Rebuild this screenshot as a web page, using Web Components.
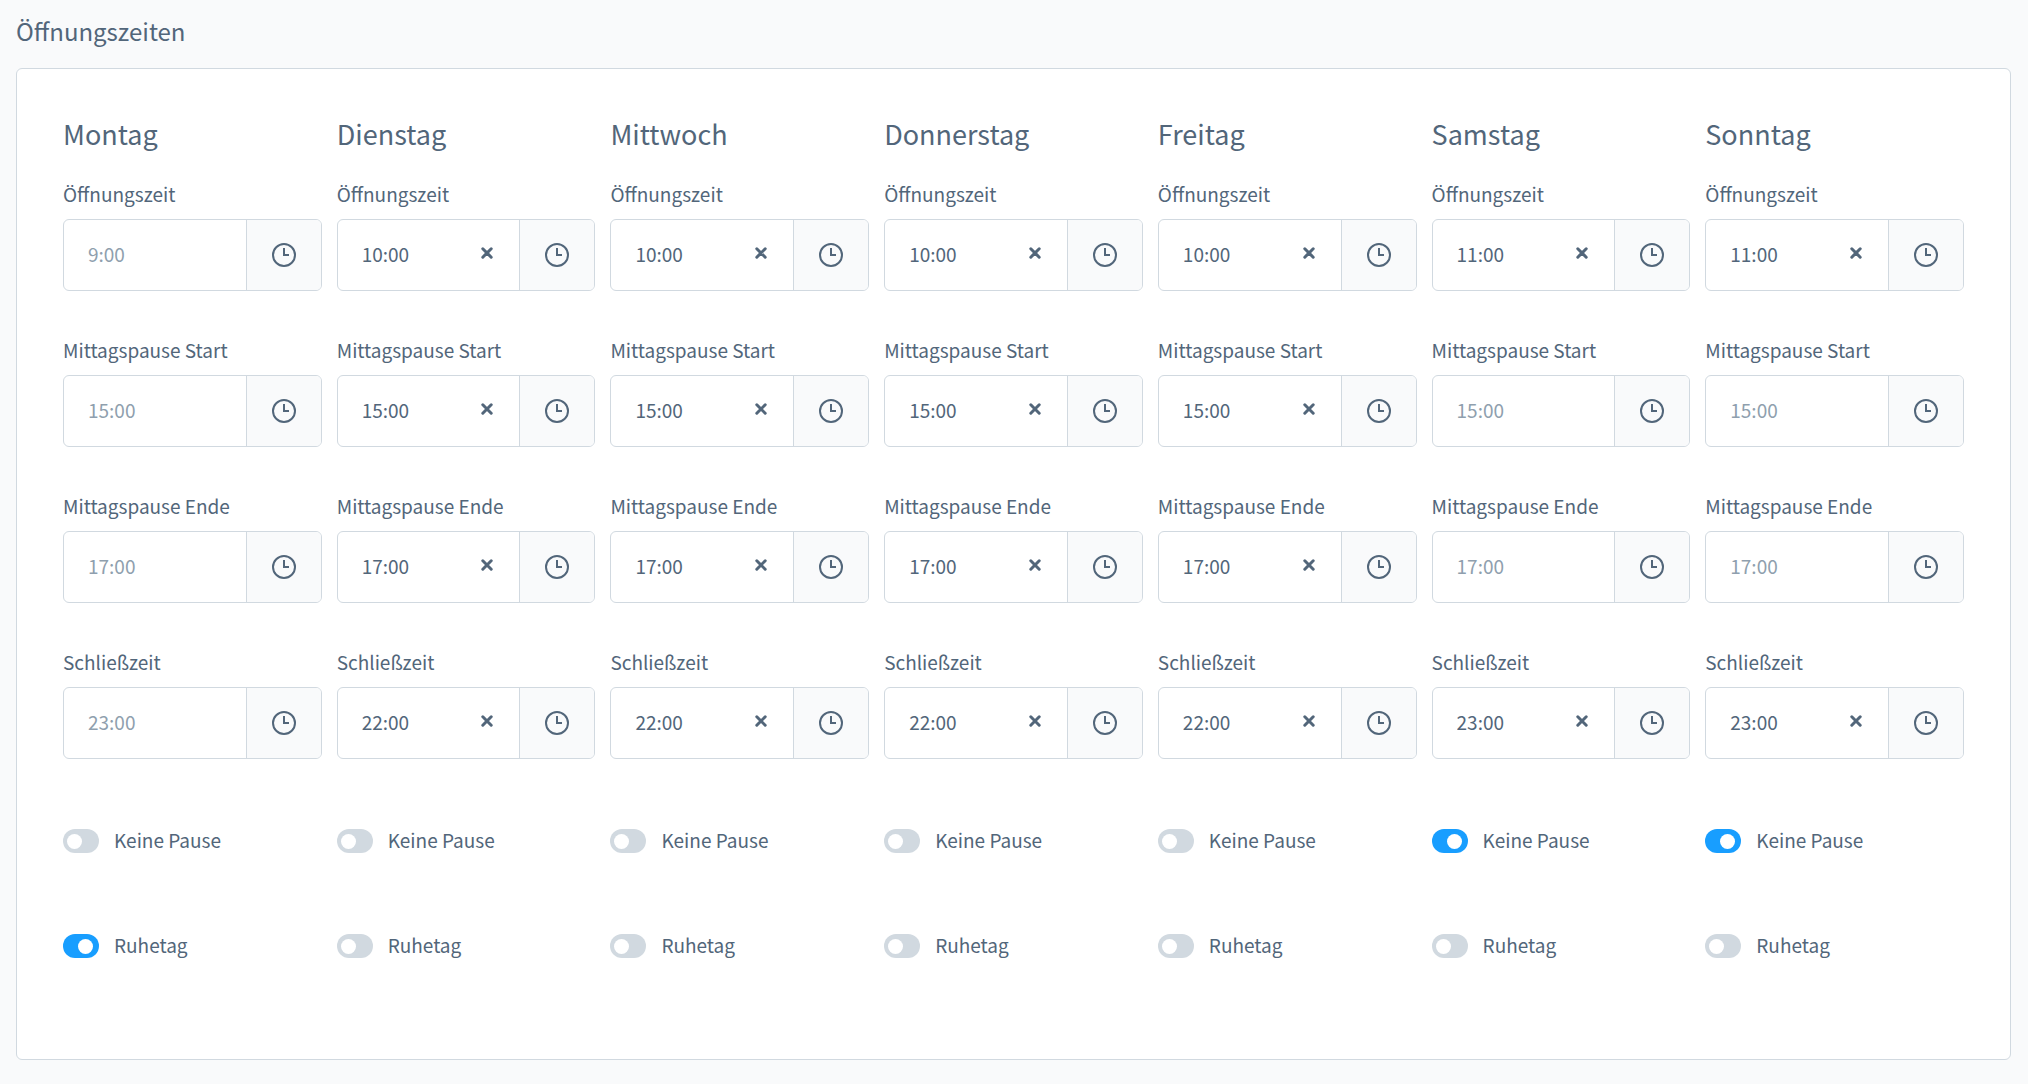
<!DOCTYPE html>
<html lang="de">
<head>
<meta charset="utf-8">
<title>Öffnungszeiten</title>
<style>
  body {
    margin: 0;
    background: #f9fafb;
    color: #52667a;
    font: 19px/24px "Noto Sans CJK SC", sans-serif;
  }
</style>
</head>
<body>
<settings-card heading="Öffnungszeiten">
  <opening-day name="Montag" ruhetag></opening-day>
  <opening-day name="Dienstag" times="10:00,15:00,17:00,22:00"></opening-day>
  <opening-day name="Mittwoch" times="10:00,15:00,17:00,22:00"></opening-day>
  <opening-day name="Donnerstag" times="10:00,15:00,17:00,22:00"></opening-day>
  <opening-day name="Freitag" times="10:00,15:00,17:00,22:00"></opening-day>
  <opening-day name="Samstag" times="11:00,,,23:00" keine-pause></opening-day>
  <opening-day name="Sonntag" times="11:00,,,23:00" keine-pause></opening-day>
</settings-card>

<template id="card">
  <style>
    :host { display: block; padding: 15px 17px 24px 16px; }
    h1 { margin: 0 0 21px; font-size: 24px; line-height: 32px; font-weight: 400; }
    section {
      display: grid;
      grid-template-columns: repeat(7, minmax(0, 1fr));
      gap: 15px;
      padding: 47px 46px 101px;
      background: #fff;
      border: 1px solid #d1d9e0;
      border-radius: 6px;
    }
  </style>
  <h1></h1>
  <section><slot></slot></section>
</template>

<template id="day">
  <style>
    :host { display: block; }
    h2 { margin: 0 0 30px; font-size: 27px; line-height: 36px; font-weight: 400; }
    .fields { display: flex; flex-direction: column; gap: 47px; margin-bottom: 70px; }
    .switches { display: flex; flex-direction: column; gap: 81px; }
  </style>
  <h2></h2>
  <div class="fields"></div>
  <div class="switches"></div>
</template>

<template id="time">
  <style>
    :host { display: block; }
    label { display: block; margin-bottom: 13px; }
    .box {
      display: flex;
      height: 70px;
      border: 1px solid #d1d9e0;
      border-radius: 6px;
      overflow: hidden;
      background: #fff;
    }
    input {
      flex: 1;
      min-width: 0;
      margin: 0;
      padding: 0 0 2px 24px;
      border: 0;
      outline: 0;
      background: none;
      color: inherit;
      font: inherit;
    }
    input::placeholder { color: #8f9fae; opacity: 1; }
    button {
      display: flex;
      align-items: center;
      justify-content: center;
      flex: none;
      margin: 0;
      padding: 0;
      border: 0;
      background: none;
      color: inherit;
    }
    .clear { width: 64px; padding-bottom: 4px; }
    .clear[hidden] { display: none; }
    .clock { width: 75px; border-left: 1px solid #d1d9e0; background: #f9fafb; }
  </style>
  <label for="t"></label>
  <div class="box">
    <input id="t" type="text">
    <button class="clear" type="button" aria-label="Leeren">
      <svg width="12" height="12" viewBox="0 0 12 12" fill="none" stroke="currentColor" stroke-width="3" stroke-linecap="round"><path d="M1.8 1.8l8.4 8.4M10.2 1.8l-8.4 8.4"/></svg>
    </button>
    <button class="clock" type="button" aria-label="Uhrzeit wählen">
      <svg width="24" height="24" viewBox="0 0 24 24" fill="none" stroke="currentColor"><circle cx="12" cy="12" r="11" stroke-width="2"/><path d="M12 5v7h5" stroke-width="2"/></svg>
    </button>
  </div>
</template>

<template id="switch">
  <style>
    :host { display: flex; align-items: center; gap: 15px; height: 24px; }
    label { padding-bottom: 2px; }
    input {
      appearance: none;
      display: flex;
      align-items: center;
      flex: none;
      width: 36px;
      height: 24px;
      margin: 0;
      padding: 0 6px 0 4px;
      box-sizing: border-box;
      border-radius: 12px;
      background: #d1d9e0;
    }
    input::before { content: ""; width: 15px; height: 15px; border-radius: 50%; background: #fff; }
    input:checked { background: #189eff; justify-content: flex-end; }
  </style>
  <input id="s" type="checkbox">
  <label for="s"></label>
</template>

<script>
  class Base extends HTMLElement {
    stamp(id) {
      const root = this.attachShadow({ mode: "open" });
      root.append(document.getElementById(id).content.cloneNode(true));
      return root;
    }
  }

  customElements.define("time-field", class extends Base {
    connectedCallback() {
      if (this.shadowRoot) return;
      const root = this.stamp("time");
      const input = root.querySelector("input");
      const clear = root.querySelector(".clear");
      root.querySelector("label").textContent = this.getAttribute("label");
      input.placeholder = this.getAttribute("placeholder");
      input.value = this.getAttribute("value") || "";
      const update = () => { clear.hidden = !input.value; };
      input.addEventListener("input", update);
      clear.addEventListener("click", () => { input.value = ""; update(); });
      update();
    }
  });

  customElements.define("toggle-switch", class extends Base {
    connectedCallback() {
      if (this.shadowRoot) return;
      const root = this.stamp("switch");
      root.querySelector("label").textContent = this.getAttribute("label");
      root.querySelector("input").checked = this.hasAttribute("checked");
    }
  });

  const FIELDS = [
    ["Öffnungszeit", "9:00"],
    ["Mittagspause Start", "15:00"],
    ["Mittagspause Ende", "17:00"],
    ["Schließzeit", "23:00"]
  ];

  customElements.define("opening-day", class extends Base {
    connectedCallback() {
      if (this.shadowRoot) return;
      const root = this.stamp("day");
      const times = (this.getAttribute("times") || "").split(",");
      root.querySelector("h2").textContent = this.getAttribute("name");
      FIELDS.forEach(([label, placeholder], i) => {
        const field = document.createElement("time-field");
        field.setAttribute("label", label);
        field.setAttribute("placeholder", placeholder);
        field.setAttribute("value", times[i] || "");
        root.querySelector(".fields").append(field);
      });
      [["Keine Pause", "keine-pause"], ["Ruhetag", "ruhetag"]].forEach(([label, flag]) => {
        const toggle = document.createElement("toggle-switch");
        toggle.setAttribute("label", label);
        toggle.toggleAttribute("checked", this.hasAttribute(flag));
        root.querySelector(".switches").append(toggle);
      });
    }
  });

  customElements.define("settings-card", class extends Base {
    connectedCallback() {
      if (this.shadowRoot) return;
      this.stamp("card").querySelector("h1").textContent = this.getAttribute("heading");
    }
  });
</script>
</body>
</html>
